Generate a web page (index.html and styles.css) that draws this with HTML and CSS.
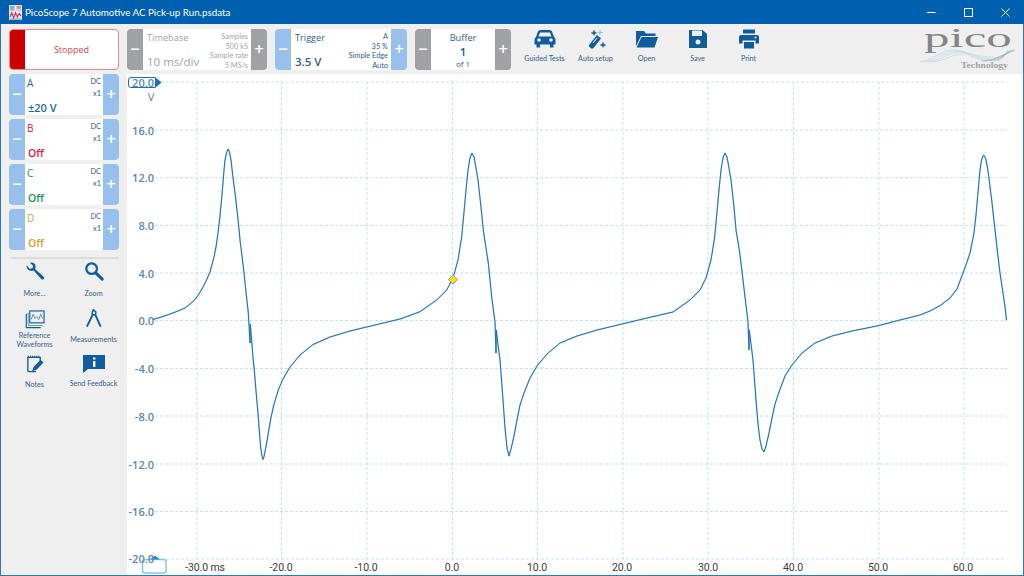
FILE: index.html
```html
<!DOCTYPE html>
<html lang="en">
<head>
<meta charset="utf-8">
<title>PicoScope 7 Automotive</title>
<link rel="stylesheet" href="styles.css">
</head>
<body>
<div class="window">
  <header class="titlebar">
    <svg class="app-icon" viewBox="0 0 14 16"><rect width="14" height="16" fill="#e9eff6"/><rect x="1" y="1" width="5" height="5" fill="#8fb3d6"/><rect x="8" y="1" width="5" height="3" fill="#e38a96"/><rect x="8" y="5" width="5" height="1" fill="#8fb3d6"/><path d="M1 13 L3 8 L5 14 L7 8 L9 13 L11 9 L13 12" fill="none" stroke="#d8304a" stroke-width="1.2"/><rect x="1" y="14.5" width="12" height="1" fill="#5b8fc0"/></svg>
    <span class="title-text">PicoScope 7 Automotive AC Pick-up Run.psdata</span>
    <div class="win-controls">
      <svg class="win-btn" viewBox="0 0 10 10"><path d="M1 5.5H9.5" stroke="#fff" fill="none"/></svg>
      <svg class="win-btn" viewBox="0 0 10 10"><rect x="1.5" y="1.5" width="8" height="8" stroke="#fff" fill="none"/></svg>
      <svg class="win-btn" viewBox="0 0 10 10"><path d="M1.5 1.5L9.5 9.5M9.5 1.5L1.5 9.5" stroke="#fff" fill="none"/></svg>
    </div>
  </header>
  <div class="body">
    <aside class="sidebar">
      <div class="stopped"><span class="stop-flag"></span><span class="stop-text">Stopped</span></div>
      <div class="channel">
        <button class="step">−</button>
        <div class="ch-body"><span class="ch-name c-a">A</span><span class="ch-meta">DC<br>x1</span><span class="ch-val ch-on c-a">±20 V</span></div>
        <button class="step">+</button>
      </div>
      <div class="channel">
        <button class="step">−</button>
        <div class="ch-body"><span class="ch-name c-b">B</span><span class="ch-meta">DC<br>x1</span><span class="ch-val c-b">Off</span></div>
        <button class="step">+</button>
      </div>
      <div class="channel">
        <button class="step">−</button>
        <div class="ch-body"><span class="ch-name c-c">C</span><span class="ch-meta">DC<br>x1</span><span class="ch-val c-c">Off</span></div>
        <button class="step">+</button>
      </div>
      <div class="channel">
        <button class="step">−</button>
        <div class="ch-body"><span class="ch-name c-d">D</span><span class="ch-meta">DC<br>x1</span><span class="ch-val c-d">Off</span></div>
        <button class="step">+</button>
      </div>
      <hr class="divider">
      <div class="tools">
        <div class="tool tool-a">
          <svg class="tool-icon" viewBox="0 0 20 20"><path d="M1 3.5 L4.5 7 L7.5 6.5 L8 4 L4.7 .8 C7.5 -.2 10.8 1.8 10.6 5 C10.6 6 10.4 6.6 10 7.4 L19.2 15.4 C20.4 16.8 18.6 19.4 16.8 18.2 L8.6 9 C5 10.5 .6 8 1 3.5Z" fill="#0f5c9f"/></svg>
          <span>More...</span>
        </div>
        <div class="tool tool-a">
          <svg class="tool-icon" viewBox="0 0 20 20"><circle cx="7.5" cy="7" r="5.6" fill="none" stroke="#0f5c9f" stroke-width="2.4"/><path d="M11.8 11.5 L18.6 18" stroke="#0f5c9f" stroke-width="3.2" stroke-linecap="round"/></svg>
          <span>Zoom</span>
        </div>
        <div class="tool tool-b">
          <svg class="tool-icon" viewBox="0 0 20 20"><rect x="4.5" y="1" width="15" height="12.5" fill="none" stroke="#0f5c9f" stroke-width="1.2"/><path d="M.8 4V18.5H16" fill="none" stroke="#0f5c9f" stroke-width="1.2"/><path d="M2.8 3V16.3H18" fill="none" stroke="#5d8fbd" stroke-width="1"/><path d="M6 10 L8 4.5 L10 9 L12 7 L14 10 L16 4.5 L18 9" fill="none" stroke="#5d8fbd" stroke-width="1"/></svg>
          <span>Reference<br>Waveforms</span>
        </div>
        <div class="tool tool-c">
          <svg class="tool-icon" viewBox="0 0 20 20"><circle cx="10" cy="4" r="2" fill="none" stroke="#0f5c9f" stroke-width="1.5"/><path d="M9.5 0V2M8.8 5.6 L2.5 18.5M11.2 5.6 L17 18.5" stroke="#0f5c9f" stroke-width="2" fill="none"/></svg>
          <span>Measurements</span>
        </div>
        <div class="tool tool-d">
          <svg class="tool-icon" viewBox="0 0 20 20"><path d="M11 17.5H3.5A1 1 0 0 1 2.5 16.5V2.5H15.5V8" fill="none" stroke="#0f5c9f" stroke-width="1.4"/><path d="M2.5 1.5H15.5" stroke="#0f5c9f" stroke-width="1.4" stroke-dasharray="1.2 1"/><path d="M7 17 L8.6 12.4 L16 5 L19 8 L11.6 15.4Z" fill="#0f5c9f"/></svg>
          <span>Notes</span>
        </div>
        <div class="tool tool-d">
          <svg class="tool-icon feedback" viewBox="0 0 22 18"><path d="M0 0H22V14H5L0 18Z" fill="#0f5c9f"/><rect x="10" y="2.5" width="2.4" height="2" fill="#fff"/><rect x="10" y="6" width="2.4" height="6" fill="#fff"/></svg>
          <span>Send Feedback</span>
        </div>
      </div>
    </aside>
    <main class="main">
      <div class="toolbar">
        <div class="ctl ctl-time">
          <button class="step gray">−</button>
          <div class="ctl-body muted">
            <div class="ctl-left"><span class="ctl-name">Timebase</span><span class="ctl-val">10 ms/div</span></div>
            <div class="ctl-right"><span>Samples</span><span>500 kS</span><span>Sample rate</span><span>5 MS/s</span></div>
          </div>
          <button class="step gray">+</button>
        </div>
        <div class="ctl ctl-trig">
          <button class="step">−</button>
          <div class="ctl-body">
            <div class="ctl-left"><span class="ctl-name">Trigger</span><span class="ctl-val">3.5 V</span></div>
            <div class="ctl-right"><span>A</span><span>35 %</span><span>Simple Edge</span><span>Auto</span></div>
          </div>
          <button class="step">+</button>
        </div>
        <div class="ctl ctl-buf">
          <button class="step gray">−</button>
          <div class="buf-body"><span class="buf-name">Buffer</span><span class="buf-num">1</span><span class="buf-of">of 1</span></div>
          <button class="step gray">+</button>
        </div>
        <div class="actions">
          <div class="action">
            <svg class="act-icon" viewBox="0 0 22 20"><path d="M2 8 L4 2.5 Q4.6 1 6.5 1 H15.5 Q17.4 1 18 2.5 L20 8 Q21.5 9 21.5 10.5 V15.5 H19.5 V18.5 H16 V15.5 H6 V18.5 H2.5 V15.5 H.5 V10.5 Q.5 9 2 8Z M4.5 7.5 H17.5 L16 3.5 H6Z" fill="#0f5c9f" fill-rule="evenodd"/><circle cx="5" cy="11" r="1.8" fill="#efefef"/><circle cx="17" cy="11" r="1.8" fill="#efefef"/></svg>
            <span>Guided Tests</span>
          </div>
          <div class="action">
            <svg class="act-icon" viewBox="0 0 22 20"><path d="M4 16 L12 6 L16 9.5 L8.5 19 Q7 20 5.5 19 Q3.5 17.5 4 16Z" fill="#0f5c9f"/><path d="M12 9 L8 14" stroke="#fff" stroke-width="1"/><path d="M9 1 L10 3 L12 4 L10 5 L9 6.5 L8 5 L6 4 L8 3Z M18 13 L19 15 L21 16 L19 17 L18 18.5 L17 17 L15 16 L17 15Z M15 1 V6 M13 3.5 H18" fill="#0f5c9f" stroke="#5d8fbd" stroke-width=".5"/></svg>
            <span>Auto setup</span>
          </div>
          <div class="action">
            <svg class="act-icon" viewBox="0 0 22 20"><path d="M0 2 H8 L10 4.5 H19.5 V7 H5 L0 17Z" fill="#0f5c9f"/><path d="M5.5 8 H22 L18.5 18.5 H0.5Z" fill="#0f5c9f"/></svg>
            <span>Open</span>
          </div>
          <div class="action">
            <svg class="act-icon" viewBox="0 0 22 20"><path d="M2 1 H15.5 L20 5 V19 H2Z M5 1.5 V7 H15 V1.5Z" fill="#0f5c9f" fill-rule="evenodd"/><circle cx="11" cy="13" r="2.5" fill="#efefef"/></svg>
            <span>Save</span>
          </div>
          <div class="action">
            <svg class="act-icon" viewBox="0 0 22 20"><path d="M5 0.5 H17 V4.5 H5Z" fill="#0f5c9f"/><path d="M3 6 H19 Q21 6 21 8 V14.5 H17.5 V11.5 H4.5 V14.5 H1 V8 Q1 6 3 6Z" fill="#0f5c9f"/><path d="M6 13 H16 V19.5 H6Z" fill="#0f5c9f"/><circle cx="17.5" cy="8.5" r="1" fill="#efefef"/></svg>
            <span>Print</span>
          </div>
        </div>
        <svg class="logo" viewBox="0 0 100 48">
          <g class="logo-wave-l">
            <path d="M3 35 C16 33 26 22 38 23 C50 24 56 33 70 34"/>
            <path d="M7 35 C20 33 28 24 40 24 C52 24 58 32 72 33"/>
            <path d="M11 35 C24 33 31 26 42 25 C54 25 60 31 74 32"/>
            <path d="M15 35 C27 34 34 28 44 27 C56 26 62 30 76 30"/>
          </g>
          <g class="logo-wave-r">
            <path d="M64 34 C74 34 86 28 98 23"/>
            <path d="M68 34 C78 33 88 27 97 23"/>
            <path d="M72 34 C81 33 89 27 95 23"/>
            <path d="M76 34 C83 33 89 28 93 23"/>
            <path d="M80 34 C85 32 88 28 91 23"/>
          </g>
          <g transform="translate(7 20) scale(1.89 1)"><text class="logo-word">pico</text></g>
          <text class="logo-tech" x="44" y="41" textLength="47" lengthAdjust="spacingAndGlyphs">Technology</text>
        </svg>
      </div>
      <div class="plot">
        <svg class="scope" viewBox="127 74 896 501">
          <g class="grid">
            <path d="M161 82H1007M155 130H1007M155 177.7H1007M155 225.4H1007M155 273H1007M155 320.5H1007M155 368.5H1007M155 416H1007M155 464H1007M155 511.5H1007M166 559H1007"/>
            <path d="M197 82V559M281.5 82V559M367 82V559M452.5 82V559M537.5 82V559M623 82V559M708 82V559M793.5 82V559M879 82V559M964 82V559"/>
          </g>
          <rect class="time-box" x="142.5" y="559.5" width="23.5" height="13.5" rx="2.5"/>
          <path class="time-tip" d="M150 559.5L155 555.5L160 559.5Z"/>
          <g class="y-labels">
            <text x="154" y="135">16.0</text><text x="154" y="182">12.0</text><text x="154" y="230">8.0</text><text x="154" y="278">4.0</text><text x="154" y="325">0.0</text><text x="154" y="373">-4.0</text><text x="154" y="421">-8.0</text><text x="154" y="469">-12.0</text><text x="154" y="516">-16.0</text><text x="154" y="563">-20.0</text>
          </g>
          <text class="y-unit" x="151" y="101">V</text>
          <path class="marker-box" d="M155 77.5H131A2.5 2.5 0 0 0 128.5 80V85A2.5 2.5 0 0 0 131 87.5H155"/>
          <path class="marker-tip" d="M155 77L161.5 82.5L155 88Z"/>
          <text class="y-labels" x="154" y="87">20.0</text>
          <defs>
            <path id="trace" d="M153 319.5 L160 317.5 170 314 178 311 185 308 190 304 195 299.5 199 294 203 287 207 279 210 272 214 257 216 247 218 233 220 216 221.5 200 223 183 224 170 225 160 226.5 153 228 149 229.5 152 231 160 232 169 233.3 180 235.5 197 237.3 213 239 229 240 240 242 256 244 273 246 292 248.3 313 249 325 250 343 250.3 324 251.5 338 253 358 254.3 370 256 391 258.3 417 260 440 261 450 262 456 263 459.5 264 456.5 265.3 450 267 441 268.3 433 270.5 420 273.3 407 275.5 399 278.3 390 283 379 290 367 300 355 313 344.5 330 337 350 331 375 325 400 319 420 311.7 436.7 300 446.7 290 453 278 458 260 461.7 237 464 212 466 190 468 170 470 158 472 153 474 157 476 168 478 180 481 207 483.3 230 486 248 488.3 263 491.7 297 495 322 496 353 496.3 330 498 345 500 360 503 400 505 428 507 448 509 456 511 449 514 436 517 420 520 405 524 393 530 378 537 366 547 354 560 343 577 336 597 330 622 324 647 318 673 312 690 300 700 290 706 278 711 260 714.7 237 717 212 719 190 721 170 723 158 725 153 727 157 729 168 731 180 734 207 736 230 739 248 741 263 745 297 748 322 749 350 749.3 330 751 344 753 360 756 400 758 424 760 440 762 449 764 452 766 446 769 433 772 418 775 404 779 392 785 376 792 365 802 353 815 343 832 336 852 331 877 326 900 320 920 315 930 311 940 305.7 950 298 957 289 963 273 967 262 970 253 974 233 976 215 977.5 198 980 170 981.5 160 983.5 155 985.5 158 987 165 988.3 173 991.7 200 995 230 997.5 252 1000 273 1003 293 1005 307 1006.5 320"/>
          </defs>
          <use href="#trace" class="wave wave-shadow"/>
          <use href="#trace" class="wave"/>
          <path class="trig" d="M453 275L457.5 279.5L453 284L448.5 279.5Z"/>
          <g class="x-labels">
            <text x="205" y="571">-30.0 ms</text><text x="281" y="571">-20.0</text><text x="366" y="571">-10.0</text><text x="452" y="571">0.0</text><text x="537" y="571">10.0</text><text x="622" y="571">20.0</text><text x="708" y="571">30.0</text><text x="793" y="571">40.0</text><text x="878" y="571">50.0</text><text x="963" y="571">60.0</text>
          </g>
        </svg>
      </div>
    </main>
  </div>
</div>
</body>
</html>
```
FILE: styles.css
```css
* { box-sizing: border-box; }
html, body { margin: 0; padding: 0; }
body { width: 1024px; height: 576px; overflow: hidden; font-family: "Open Sans", "Noto Sans", sans-serif; background: #efefef; }
.window { width: 1024px; height: 576px; display: flex; flex-direction: column; border: 1px solid #2f78bd; border-top: 0; }
.titlebar { height: 24px; flex: none; background: #0060b0; display: flex; align-items: center; padding-left: 8px; color: #fff; margin: 0 -1px; }
.app-icon { width: 13px; height: 15px; margin-left: 1px; }
.title-text { margin-left: 3px; font-family: Lato, "Open Sans", sans-serif; font-size: 9.8px; white-space: nowrap; }
.win-controls { margin-left: auto; display: flex; gap: 27px; padding-right: 14px; }
.win-btn { width: 10px; height: 10px; display: block; }
.body { flex: 1; display: flex; min-height: 0; }
.sidebar { width: 126px; flex: none; padding: 5px 8px 0 8px; background: #efefef; display: flex; flex-direction: column; }
.stopped { height: 41px; flex: none; display: flex; background: #fff; border: 1px solid #e58a8a; border-radius: 4px; overflow: hidden; margin-bottom: 4px; }
.stop-flag { width: 15px; background: #cc0000; }
.stop-text { flex: 1; display: flex; align-items: center; justify-content: center; color: #d8434a; font-size: 9px; }
.channel { height: 41px; flex: none; display: flex; margin-bottom: 4px; background: #fff; border-radius: 4px; overflow: hidden; }
.step { width: 16px; flex: none; border: 0; padding: 0 0 2px; background: #97c1ec; color: #fff; font-family: "Open Sans", sans-serif; font-size: 17px; font-weight: 600; line-height: 1; display: flex; align-items: center; justify-content: center; }
.step.gray { background: #a0a1a4; }
.ch-body { flex: 1; position: relative; }
.ch-name { position: absolute; left: 2px; top: 2px; font-size: 10px; }
.ch-meta { position: absolute; right: 2px; top: 2px; text-align: right; font-family: Lato, "Open Sans", sans-serif; font-size: 7.4px; line-height: 11.5px; color: #33618f; }
.ch-val { position: absolute; left: 3px; bottom: 0; font-size: 10.5px; font-weight: 600; }
.ch-on { font-size: 11px; }
.c-a { color: #1e6aa8; }
.c-b { color: #e5173f; }
.c-c { color: #159a4e; }
.c-d { color: #d2a23a; }
.divider { margin: 3px 0 0 2px; height: 2px; width: 108px; border: 0; background: #dcdcdc; flex: none; }
.tools { display: grid; grid-template-columns: 59px 59px; margin-left: -4px; }
.tool { display: flex; flex-direction: column; align-items: center; font-family: Lato, "Open Sans", sans-serif; font-size: 7.2px; line-height: 9px; color: #33618f; text-align: center; white-space: nowrap; }
.tool-a { height: 48px; padding-top: 3px; }
.tool-b { height: 46px; padding-top: 3px; }
.tool-c { height: 46px; padding-top: 2px; }
.tool-d { height: 36px; padding-top: 2px; }
.tool-a span { margin-top: 8px; }
.tool-b span { margin-top: 2px; }
.tool-c span { margin-top: 7px; }
.tool-d span { margin-top: 6px; }
.tool-icon { width: 20px; height: 19px; display: block; }
.tool-icon.feedback { width: 22px; height: 18px; }
.main { flex: 1; display: flex; flex-direction: column; min-width: 0; }
.toolbar { height: 50px; flex: none; display: flex; padding-top: 5px; background: #efefef; position: relative; }
.ctl { height: 41px; flex: none; display: flex; background: #fff; border-radius: 4px; overflow: hidden; margin-right: 8px; }
.ctl-time { width: 140px; }
.ctl-trig { width: 132px; }
.ctl-buf { width: 96px; }
.ctl-body { flex: 1; display: flex; justify-content: space-between; padding: 2px 3px 1px 4px; color: #33618f; }
.ctl-body.muted { color: #a4a5a7; }
.ctl-left { display: flex; flex-direction: column; justify-content: space-between; }
.ctl-name { font-size: 9.2px; }
.ctl-val { font-size: 11.5px; font-weight: 600; }
.muted .ctl-val { font-weight: 400; font-size: 11.5px; }
.ctl-right { display: flex; flex-direction: column; align-items: flex-end; font-family: Lato, "Open Sans", sans-serif; font-size: 7.4px; line-height: 9.5px; padding-top: 1px; }
.buf-body { flex: 1; display: flex; flex-direction: column; align-items: center; color: #33618f; padding-top: 2px; }
.buf-name { font-size: 9.2px; line-height: 13px; }
.buf-num { font-size: 11.5px; font-weight: 600; color: #0f5c9f; line-height: 15px; }
.buf-of { font-size: 8px; line-height: 10px; }
.actions { display: flex; }
.action { width: 51px; display: flex; flex-direction: column; align-items: center; font-family: Lato, "Open Sans", sans-serif; font-size: 7.2px; line-height: 10px; color: #33618f; white-space: nowrap; }
.act-icon { width: 22px; height: 20px; display: block; margin-bottom: 5px; }
.logo { position: absolute; right: 6px; top: 3px; width: 100px; height: 48px; overflow: visible; }
.logo-word { font-family: "Liberation Serif", serif; font-size: 27px; fill: #858587; }
.logo-tech { font-family: "Liberation Serif", serif; font-size: 8.5px; font-weight: 700; fill: #a2a3a5; }
.logo-wave-l path { fill: none; stroke: #b6d4e6; stroke-width: .6; }
.logo-wave-r path { fill: none; stroke: #8fb0c4; stroke-width: .6; }
.plot { flex: 1; background: #fff; min-height: 0; }
.scope { display: block; width: 896px; height: 501px; }
.grid path { fill: none; stroke: #bfe4f0; stroke-width: 1; stroke-dasharray: 3 2; }
.y-labels text, text.y-labels { font-size: 11px; fill: #5589bb; text-anchor: end; font-weight: 600; }
.y-unit { font-size: 11px; fill: #4f86ba; text-anchor: middle; }
.marker-box { fill: #fff; stroke: #1a6fb5; stroke-width: 1; }
.marker-tip { fill: #1a6fb5; }
.wave { fill: none; stroke: #1a6fb5; stroke-width: 1; stroke-linejoin: round; }
.wave-shadow { stroke: #c2d9ec; stroke-width: 1.6; }
.trig { fill: #ffe100; stroke: #a08fc0; stroke-width: 1; }
.time-box { fill: #fff; stroke: #8cc4e6; stroke-width: 1.5; }
.time-tip { fill: #1e8ed2; }
.x-labels text { font-family: Roboto, "Open Sans", sans-serif; font-size: 10.5px; letter-spacing: -0.1px; fill: #3c3c3c; text-anchor: middle; }
```
